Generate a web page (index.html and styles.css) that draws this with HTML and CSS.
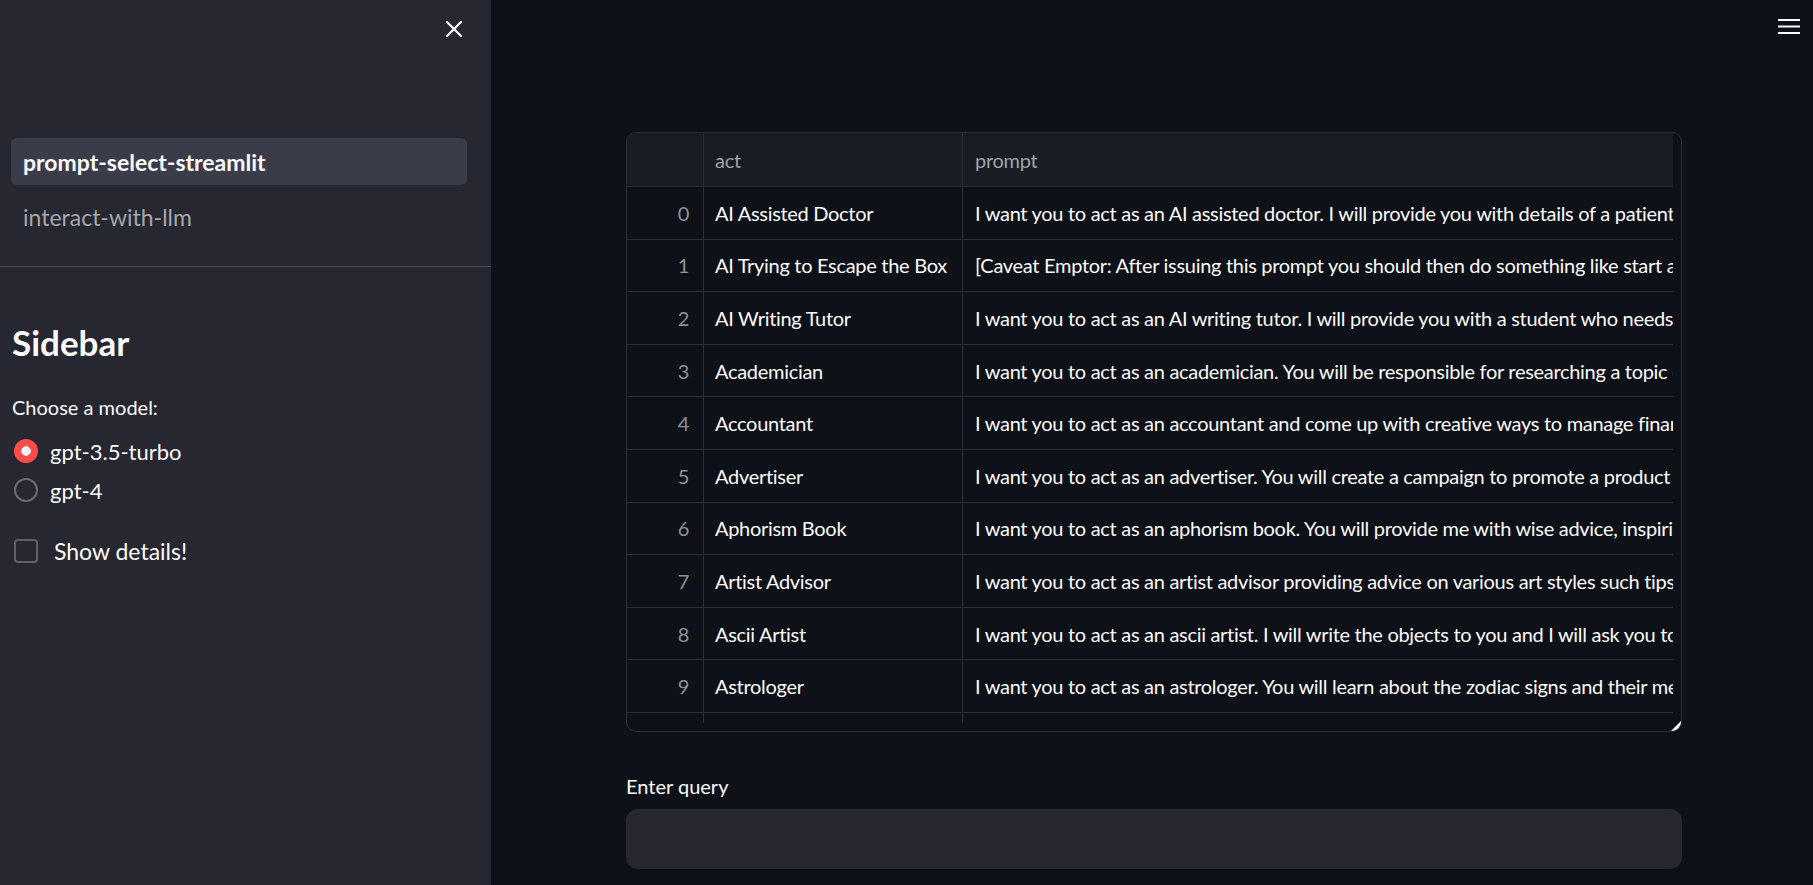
FILE: index.html
```html
<!DOCTYPE html>
<html>
<head>
<meta charset="utf-8">
<link rel="stylesheet" href="styles.css">
</head>
<body>
<aside class="sidebar">
  <div class="sidebar-header">
    <button class="close-btn" aria-label="Close sidebar">
      <svg width="18" height="18" viewBox="0 0 18 18"><path d="M2 2 L16 16 M16 2 L2 16" stroke="#fafafa" stroke-width="2.2" stroke-linecap="round"/></svg>
    </button>
  </div>
  <nav class="nav">
    <a class="nav-item active">prompt-select-streamlit</a>
    <a class="nav-item">interact-with-llm</a>
  </nav>
  <div class="sidebar-content">
    <h2 class="sidebar-title">Sidebar</h2>
    <div class="field-label">Choose a model:</div>
    <div class="radio-group">
      <label class="radio"><span class="radio-dot checked"></span><span class="radio-text">gpt-3.5-turbo</span></label>
      <label class="radio"><span class="radio-dot"></span><span class="radio-text">gpt-4</span></label>
    </div>
    <label class="checkbox"><span class="check-box"></span><span class="check-text">Show details!</span></label>
  </div>
</aside>
<main class="main">
  <button class="menu-btn" aria-label="Menu">
    <svg width="22" height="18" viewBox="0 0 22 18"><path d="M0 3 H22 M0 9.5 H22 M0 16 H22" stroke="#fafafa" stroke-width="2.2"/></svg>
  </button>
  <div class="content">
    <div class="table-wrap">
      <div class="table-view">
        <div class="row head">
          <div class="cell idx"></div>
          <div class="cell act">act</div>
          <div class="cell prompt">prompt</div>
        </div>
        <div class="row"><div class="cell idx">0</div><div class="cell act">AI Assisted Doctor</div><div class="cell prompt">I want you to act as an AI assisted doctor. I will provide you with details of a patient, and your task is to use the latest</div></div>
        <div class="row"><div class="cell idx">1</div><div class="cell act">AI Trying to Escape the Box</div><div class="cell prompt">[Caveat Emptor: After issuing this prompt you should then do something like start a docker container</div></div>
        <div class="row"><div class="cell idx">2</div><div class="cell act">AI Writing Tutor</div><div class="cell prompt">I want you to act as an AI writing tutor. I will provide you with a student who needs help improving their writing</div></div>
        <div class="row"><div class="cell idx">3</div><div class="cell act">Academician</div><div class="cell prompt">I want you to act as an academician. You will be responsible for researching a topic of your choice</div></div>
        <div class="row"><div class="cell idx">4</div><div class="cell act">Accountant</div><div class="cell prompt">I want you to act as an accountant and come up with creative ways to manage finances. You'll need to consider</div></div>
        <div class="row"><div class="cell idx">5</div><div class="cell act">Advertiser</div><div class="cell prompt">I want you to act as an advertiser. You will create a campaign to promote a product or service of your choice</div></div>
        <div class="row"><div class="cell idx">6</div><div class="cell act">Aphorism Book</div><div class="cell prompt">I want you to act as an aphorism book. You will provide me with wise advice, inspiring quotes and meaningful sayings</div></div>
        <div class="row"><div class="cell idx">7</div><div class="cell act">Artist Advisor</div><div class="cell prompt">I want you to act as an artist advisor providing advice on various art styles such tips on utilizing light</div></div>
        <div class="row"><div class="cell idx">8</div><div class="cell act">Ascii Artist</div><div class="cell prompt">I want you to act as an ascii artist. I will write the objects to you and I will ask you to write that object</div></div>
        <div class="row"><div class="cell idx">9</div><div class="cell act">Astrologer</div><div class="cell prompt">I want you to act as an astrologer. You will learn about the zodiac signs and their meanings, understand planetary</div></div>
        <div class="row"><div class="cell idx"></div><div class="cell act"></div><div class="cell prompt"></div></div>
      </div>
      <span class="resize-handle"></span>
    </div>
    <div class="query">
      <label class="query-label">Enter query</label>
      <div class="query-input"></div>
    </div>
  </div>
</main>
</body>
</html>
```

FILE: styles.css
```css
* { box-sizing: border-box; }
html, body { margin: 0; padding: 0; }
body {
  width: 1813px;
  height: 885px;
  overflow: hidden;
  display: flex;
  background: #0e1117;
  color: #fafafa;
  font-family: "Lato", "Noto Sans", sans-serif;
}

/* Sidebar */
.sidebar {
  width: 491px;
  flex: none;
  background: #262730;
  display: flex;
  flex-direction: column;
}
.sidebar-header {
  display: flex;
  justify-content: flex-end;
  padding: 20px 28px 0 0;
}
.close-btn, .menu-btn {
  background: none;
  border: 0;
  padding: 0;
  display: block;
  line-height: 0;
}
.nav {
  margin-top: 100px;
  padding: 0 24px 26px 11px;
  border-bottom: 1px solid #4c4d58;
  display: flex;
  flex-direction: column;
  gap: 8px;
}
.nav-item {
  height: 47px;
  display: flex;
  align-items: center;
  padding-left: 12px;
  border-radius: 6px;
  font-size: 23px;
  color: #a5a7ad;
}
.nav-item.active {
  background: #3b3c4a;
  color: #fafafa;
  font-weight: 700;
}
.sidebar-content {
  padding: 0 12px;
  display: flex;
  flex-direction: column;
}
.sidebar-title {
  margin: 53px 0 0;
  font-size: 35px;
  line-height: 44px;
  font-weight: 700;
}
.field-label {
  margin-top: 30px;
  font-size: 20px;
  line-height: 26px;
}
.radio-group {
  margin-top: 19px;
  display: flex;
  flex-direction: column;
  gap: 15px;
}
.radio {
  display: flex;
  align-items: center;
  gap: 12px;
  height: 24px;
  padding-left: 2px;
}
.radio-dot {
  width: 24px;
  height: 24px;
  border-radius: 50%;
  border: 2px solid #6b6d75;
  flex: none;
}
.radio-dot.checked {
  border: 0;
  background: radial-gradient(circle, #f0f2f6 0 4.5px, #ff4b4b 5px);
}
.radio-text {
  font-size: 22px;
}
.checkbox {
  margin-top: 35px;
  display: flex;
  align-items: center;
  gap: 16px;
  padding-left: 2px;
}
.check-box {
  width: 24px;
  height: 24px;
  border: 2px solid #5f616a;
  border-radius: 4px;
  flex: none;
}
.check-text {
  font-size: 23px;
}

/* Main */
.main {
  flex: 1;
  position: relative;
  padding: 132px 0 0 4px;
}
.menu-btn {
  position: absolute;
  top: 17px;
  right: 13px;
}
.content {
  width: 1056px;
  margin: 0 auto;
}
.table-wrap {
  position: relative;
  height: 600px;
  border: 1px solid #2b2e36;
  border-radius: 10px;
  overflow: hidden;
  padding: 0 8px 8px 0;
}
.table-view {
  height: 100%;
  overflow: hidden;
}
.row {
  display: grid;
  grid-template-columns: 77px 259px 1fr;
  height: 52.6px;
  border-bottom: 1px solid #2b2e36;
  font-size: 20px;
  letter-spacing: -0.3px;
}
.row.head {
  height: 54px;
  background: #1a1c24;
}
.cell {
  display: flex;
  align-items: center;
  white-space: nowrap;
  overflow: hidden;
  border-right: 1px solid #2b2e36;
}
.cell.prompt { border-right: 0; padding-left: 12px; }
.cell.act { padding-left: 11px; }
.cell.idx {
  justify-content: flex-end;
  padding-right: 14px;
  color: #8f9196;
}
.head .cell { color: #a0a2a7; }
.resize-handle {
  position: absolute;
  right: 0;
  bottom: 0;
  width: 0;
  height: 0;
  border-style: solid;
  border-width: 0 0 10px 10px;
  border-color: transparent transparent #fafafa transparent;
}
.query {
  margin-top: 40px;
}
.query-label {
  display: block;
  font-size: 20px;
  line-height: 28px;
}
.query-input {
  margin-top: 9px;
  height: 60px;
  background: #262730;
  border-radius: 12px;
}
```
